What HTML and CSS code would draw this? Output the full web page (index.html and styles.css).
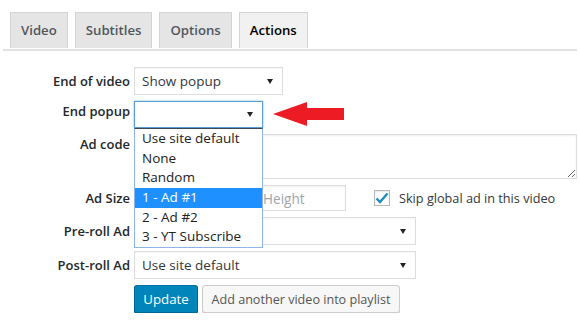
FILE: index.html
```html
<!DOCTYPE html>
<html>
<head>
<meta charset="utf-8">
<link rel="stylesheet" href="styles.css">
</head>
<body>
<div class="wrap">
  <nav class="tabs">
    <a class="tab">Video</a>
    <a class="tab">Subtitles</a>
    <a class="tab">Options</a>
    <a class="tab tab-active">Actions</a>
  </nav>
  <div class="form">
    <div class="row">
      <label class="lbl">End of video</label>
      <div class="ctl">
        <div class="select sel-md"><span class="sel-text">Show popup</span><span class="caret"></span></div>
      </div>
    </div>
    <div class="row row-top">
      <label class="lbl">End popup</label>
      <div class="ctl ctl-rel">
        <div class="select sel-sm sel-focus"><span class="sel-text"></span><span class="caret"></span></div>
        <ul class="dropdown">
          <li>Use site default</li>
          <li>None</li>
          <li>Random</li>
          <li class="hl">1 - Ad #1</li>
          <li>2 - Ad #2</li>
          <li>3 - YT Subscribe</li>
        </ul>
        <svg class="arrow" width="72" height="26" viewBox="0 0 72 26"><polygon points="0,13 34,1 34,7 71,7 71,19 34,19 34,25" fill="#ed1c24"/></svg>
      </div>
    </div>
    <div class="row row-top">
      <label class="lbl">Ad code</label>
      <div class="ctl"><textarea class="area"></textarea></div>
    </div>
    <div class="row">
      <label class="lbl">Ad Size</label>
      <div class="ctl size">
        <input class="inp inp-w" placeholder="Width">
        <input class="inp inp-h" placeholder="Height">
        <span class="check"><svg width="14" height="12" viewBox="0 0 14 12"><path d="M1.5 6.5 L5 10 L12.5 1.5" fill="none" stroke="#1e8cbe" stroke-width="2.4"/></svg></span>
        <span class="check-lbl">Skip global ad in this video</span>
      </div>
    </div>
    <div class="row">
      <label class="lbl">Pre-roll Ad</label>
      <div class="ctl">
        <div class="select sel-lg"><span class="sel-text">Use site default</span><span class="caret"></span></div>
      </div>
    </div>
    <div class="row">
      <label class="lbl">Post-roll Ad</label>
      <div class="ctl">
        <div class="select sel-lg"><span class="sel-text">Use site default</span><span class="caret"></span></div>
      </div>
    </div>
    <div class="row">
      <span class="lbl"></span>
      <div class="ctl buttons">
        <button class="btn btn-primary">Update</button>
        <button class="btn btn-secondary">Add another video into playlist</button>
      </div>
    </div>
  </div>
</div>
</body>
</html>
```
FILE: styles.css
```css
* { box-sizing: border-box; }
body {
  margin: 0;
  background: #fff;
  font-family: "Open Sans", "Noto Sans", sans-serif;
  font-size: 13.3px;
  color: #32373c;
}
.wrap { padding: 12px 3px 0 3px; }

.tabs {
  display: flex;
  gap: 7px;
  padding-left: 7px;
  padding-bottom: 1px;
  border-bottom: 2px solid #e2e2e2;
}
.tab {
  display: block;
  height: 36px;
  line-height: 34px;
  padding: 0 10px;
  border: 1px solid #d4d4d4;
  border-bottom: none;
  background: #e5e5e5;
  color: #50575e;
  font-weight: 600;
  font-size: 13.2px;
}
.tab-active { background: #f1f1f1; color: #000; }

.form {
  display: flex;
  flex-direction: column;
  gap: 6px;
  padding-top: 16px;
}
.row {
  display: grid;
  grid-template-columns: 127px 1fr;
  column-gap: 4px;
  align-items: center;
}
.row-top { align-items: start; }
.row-top .lbl { padding-top: 1px; }
.lbl {
  text-align: right;
  font-weight: 600;
  font-size: 13px;
  color: #23282d;
}
.ctl { display: flex; align-items: center; }
.ctl-rel { position: relative; }

.select {
  display: flex;
  align-items: center;
  justify-content: space-between;
  height: 28px;
  padding: 0 9px 0 7px;
  border: 1px solid #ddd;
  background: #fff;
  box-shadow: inset 0 1px 2px rgba(0,0,0,.04);
  color: #32373c;
  font-size: 13.5px;
}
.sel-md { width: 149px; }
.sel-sm { width: 129px; height: 27px; }
.sel-lg { width: 282px; }
.sel-focus {
  border-color: #5b9dd9;
  box-shadow: 0 0 2px rgba(30,140,190,.6);
}
.caret {
  width: 0; height: 0;
  border-left: 3.5px solid transparent;
  border-right: 3.5px solid transparent;
  border-top: 5px solid #222;
}

.dropdown {
  position: absolute;
  left: 0;
  top: 27px;
  z-index: 5;
  width: 129px;
  margin: 0;
  padding: 0;
  list-style: none;
  background: #fff;
  border: 1px solid #8fb5e6;
  border-top: 1px solid #3b4656;
  color: #222;
  font-size: 13.5px;
}
.dropdown li {
  height: 19.7px;
  line-height: 19.7px;
  padding-left: 7px;
  white-space: nowrap;
}
.dropdown .hl { background: #1e90ff; color: #fff; }

.arrow { position: absolute; left: 139px; top: 0; }

.area {
  display: block;
  width: 443px;
  height: 45px;
  margin: 0;
  border: 1px solid #ddd;
  box-shadow: inset 0 1px 2px rgba(0,0,0,.07);
  font: inherit;
  resize: both;
}

.size { gap: 6px; }
.inp {
  height: 26px;
  border: 1px solid #ddd;
  box-shadow: inset 0 1px 2px rgba(0,0,0,.07);
  padding: 0 6px;
  font: inherit;
  font-size: 13.6px;
  color: #32373c;
}
.inp::placeholder { color: #a0a5aa; }
.inp-w { width: 116px; }
.inp-h { width: 90px; }
.check {
  display: flex;
  align-items: center;
  justify-content: center;
  width: 16px;
  height: 16px;
  margin-left: 22px;
  border: 1px solid #b4b9be;
  background: #fff;
  box-shadow: inset 0 1px 2px rgba(0,0,0,.1);
}
.check-lbl { margin-left: 3px; color: #32373c; font-size: 12.7px; }

.buttons { gap: 4px; }
.btn {
  height: 28px;
  padding: 0 10px;
  border: 1px solid #ccc;
  border-radius: 3px;
  background: #f7f7f7;
  box-shadow: 0 1px 0 #ccc;
  color: #555;
  font: inherit;
  font-size: 13.3px;
}
.btn-secondary {
  width: 198px;
  padding: 0;
  font-size: 12.6px;
}
.btn-primary {
  width: 64px;
  padding: 0;
  background: #0085ba;
  border-color: #0073aa #006799 #006799;
  box-shadow: 0 1px 0 #006799;
  color: #fff;
}
```
